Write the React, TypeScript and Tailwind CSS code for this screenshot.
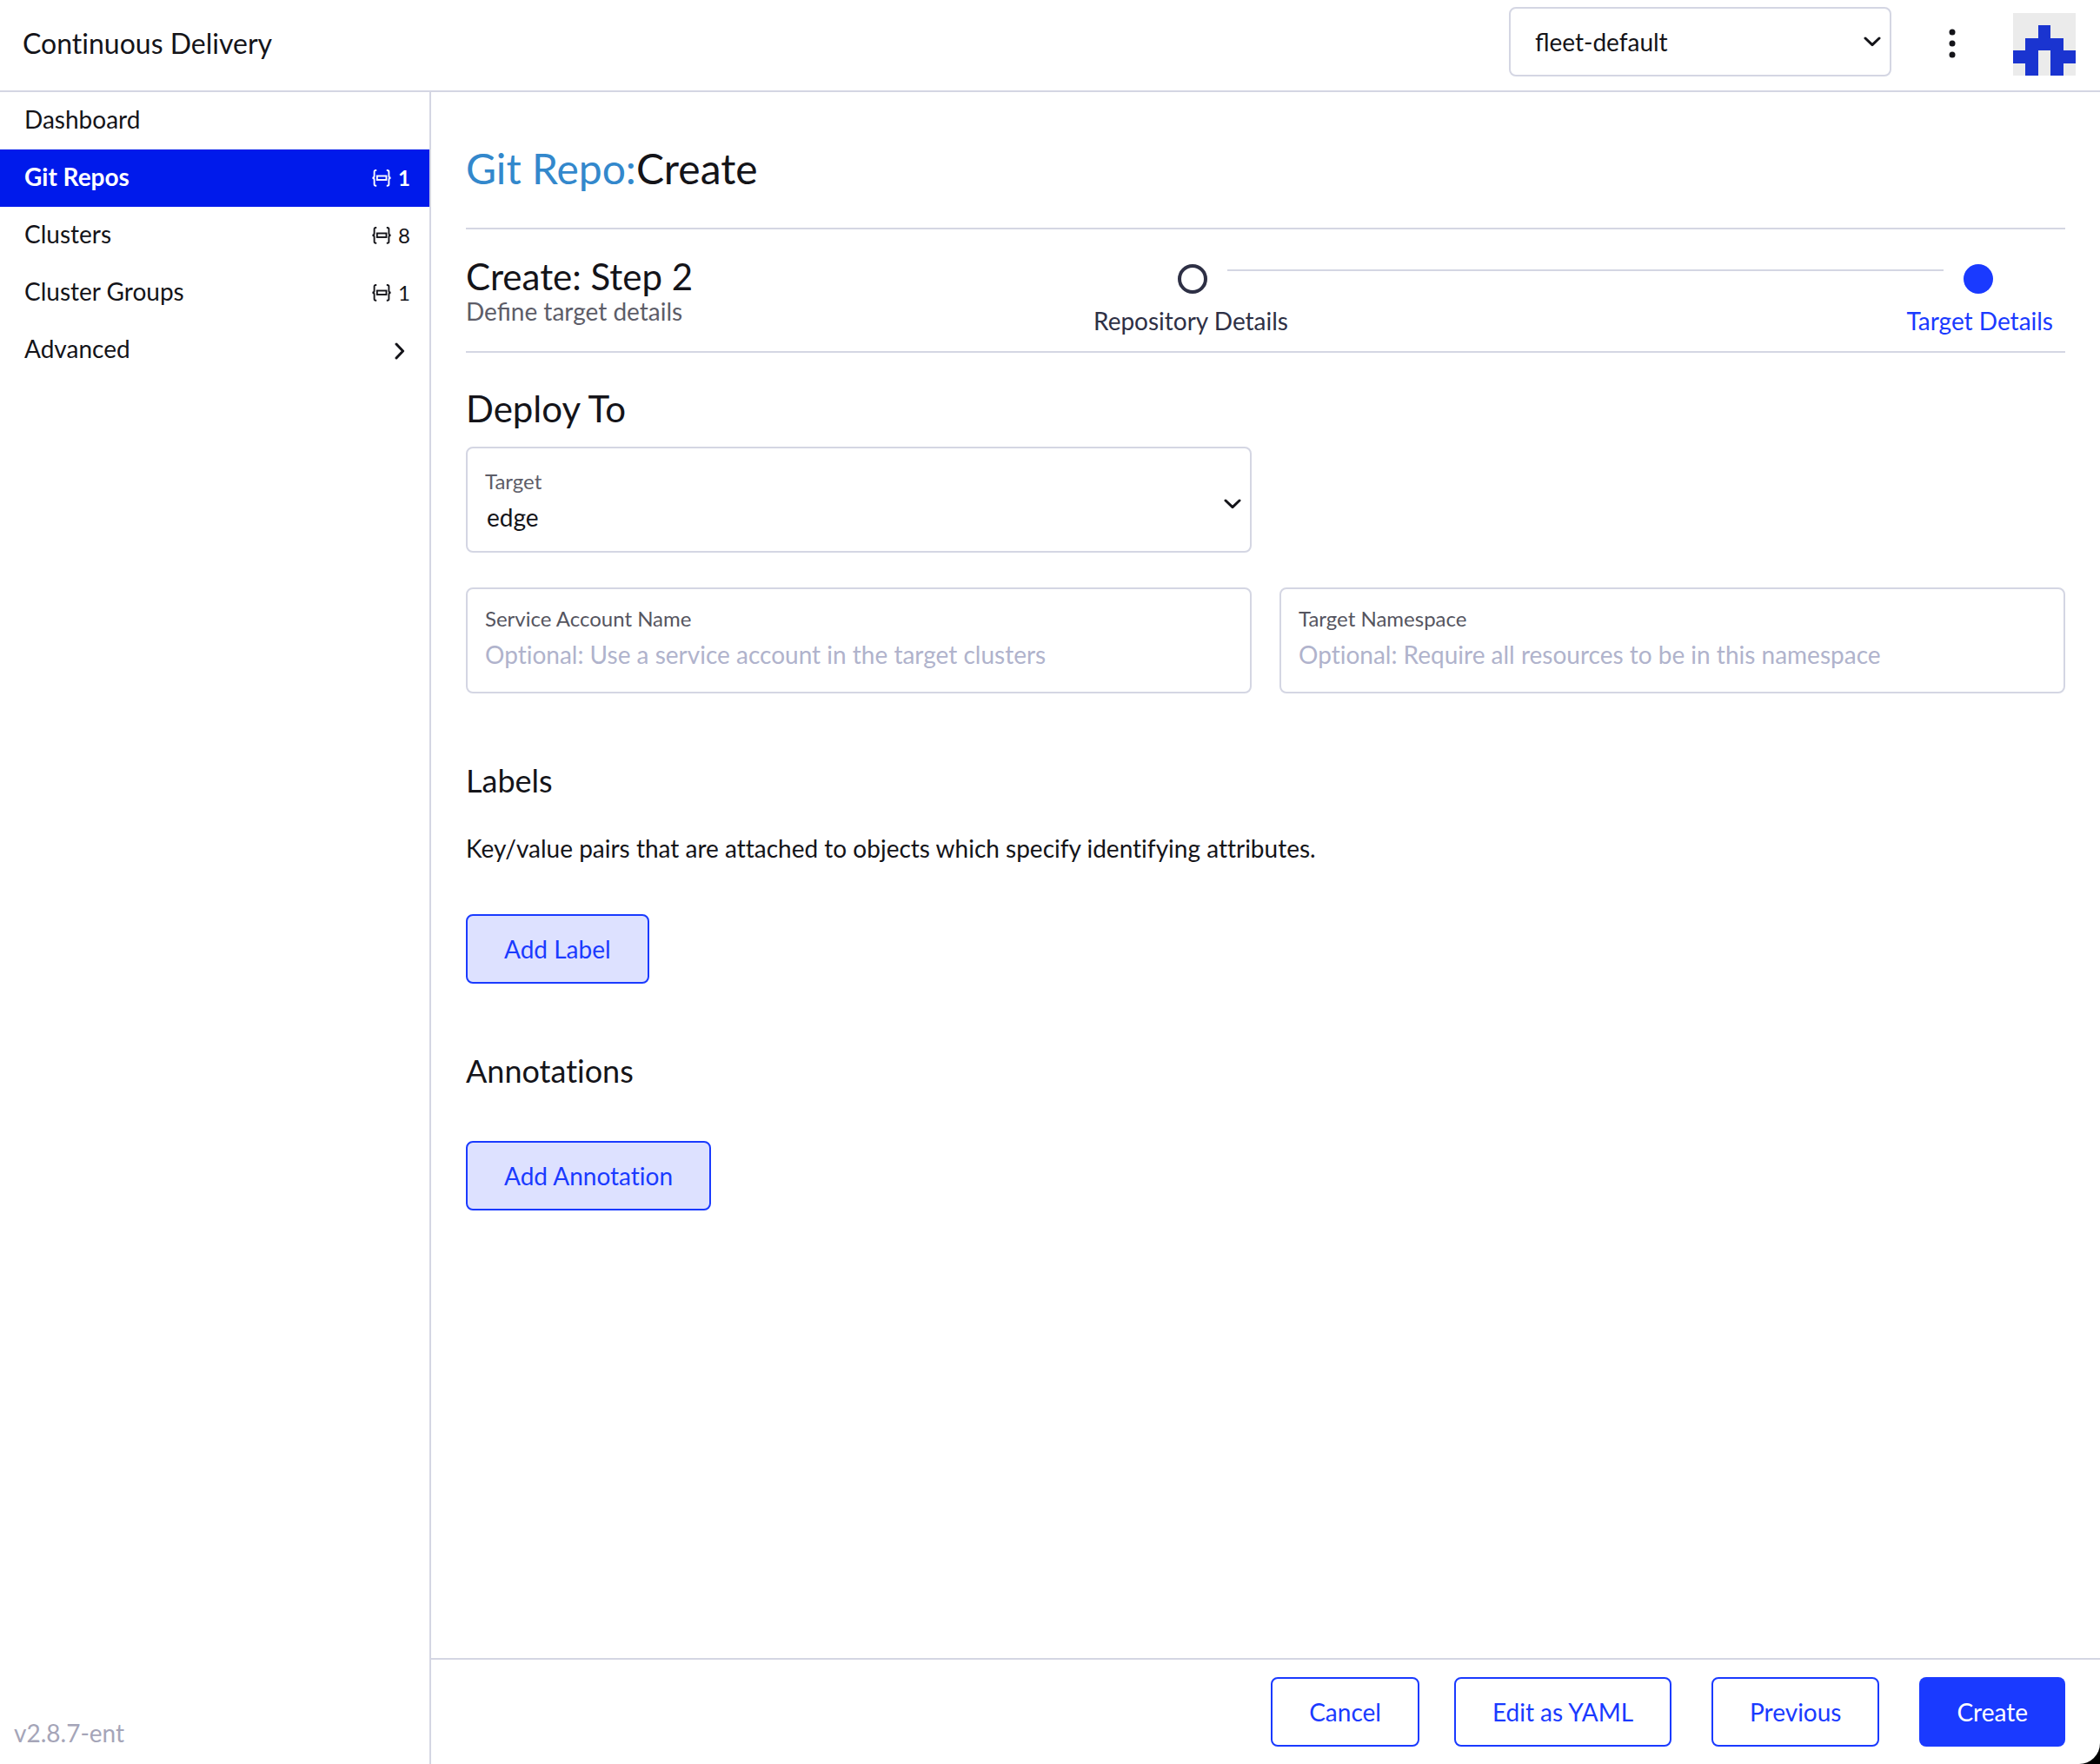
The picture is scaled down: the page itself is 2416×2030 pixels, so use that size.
import React, { useId, useState } from "react";

function NamespaceIcon() {
  return (
    <svg viewBox="0 0 22 20" className="h-5 w-[22px]" fill="none" stroke="currentColor" strokeWidth="1.9" aria-hidden="true">
      <path d="M5.2 1H4.4C3.2 1 2.6 1.6 2.6 2.8V7.6C2.6 9 1.8 9.8 0.4 9.8C1.8 9.8 2.6 10.6 2.6 12V17C2.6 18.2 3.2 18.8 4.4 18.8H5.2" />
      <path d="M16.8 1H17.6C18.8 1 19.4 1.6 19.4 2.8V7.6C19.4 9 20.2 9.8 21.6 9.8C20.2 9.8 19.4 10.6 19.4 12V17C19.4 18.2 18.8 18.8 17.6 18.8H16.8" />
      <rect x="5.8" y="7.5" width="10.7" height="4.5" />
    </svg>
  );
}

function Chevron({ className }: { className: string }) {
  return (
    <svg viewBox="0 0 20 12" className={className} fill="none" stroke="#141419" strokeWidth="3" strokeLinecap="round" strokeLinejoin="round" aria-hidden="true">
      <path d="M2 2L10 9.6L18 2" />
    </svg>
  );
}

function Avatar() {
  return (
    <svg viewBox="0 0 5 5" className="h-[72px] w-[72px]" shapeRendering="crispEdges" role="img" aria-label="User avatar">
      <rect width="5" height="5" fill="#ebebeb" />
      <path fill="#1a34d0" d="M2 1H3V2H4V3H5V4H4V5H3V3H2V5H1V4H0V3H1V2H2Z" />
    </svg>
  );
}

type NavItem = { label: string; count?: number; active?: boolean; expandable?: boolean };

const navItems: NavItem[] = [
  { label: "Dashboard" },
  { label: "Git Repos", count: 1, active: true },
  { label: "Clusters", count: 8 },
  { label: "Cluster Groups", count: 1 },
  { label: "Advanced", expandable: true },
];

function Sidebar() {
  return (
    <nav className="flex w-[496px] shrink-0 flex-col border-r-2 border-[#d4d6e3]">
      {navItems.map((item) => (
        <a
          key={item.label}
          href="#"
          className={
            item.active
              ? "flex h-[66px] items-center justify-between bg-[#001aeb] pr-[22px] pl-7 font-bold text-white"
              : "flex h-[66px] items-center justify-between pr-[22px] pl-7"
          }
        >
          <span className="pb-1">{item.label}</span>
          {item.count !== undefined && (
            <span className="flex items-center gap-2 text-2xl">
              <NamespaceIcon />
              {item.count}
            </span>
          )}
          {item.expandable && <Chevron className="mt-0.5 mr-0.5 h-3 w-5 -rotate-90" />}
        </a>
      ))}
      <span className="mt-auto px-4 pb-5 leading-8 text-[#a5a5b8]">v2.8.7-ent</span>
    </nav>
  );
}

function TextField({ label, placeholder }: { label: string; placeholder: string }) {
  const id = useId();
  return (
    <div className="flex h-[122px] flex-col rounded-lg border-2 border-[#d4d6e3] px-5 pt-[18px]">
      <label htmlFor={id} className="text-2xl leading-8 text-[#55555f]">
        {label}
      </label>
      <input id={id} type="text" placeholder={placeholder} className="h-[50px] w-full bg-transparent outline-none placeholder:text-[#b0b3cc]" />
    </div>
  );
}

function Button({ variant, children }: { variant: "outline" | "tinted" | "solid"; children: React.ReactNode }) {
  const look = {
    outline: "h-20 rounded-lg border-2 border-[#1a3aff] bg-white px-[42px] text-[#1a3aff]",
    tinted: "h-20 rounded-lg border-2 border-[#1a3aff] bg-[#dde1ff] px-[42px] text-[#1a3aff]",
    solid: "h-20 rounded-lg bg-[#1a3aff] px-[43px] text-white",
  }[variant];
  return (
    <button type="button" className={look}>
      {children}
    </button>
  );
}

export default function App() {
  const [workspace, setWorkspace] = useState("fleet-default");
  const [target, setTarget] = useState("edge");

  return (
    <div className="bg-black">
      <div className="flex min-h-screen flex-col rounded-br-[24px] bg-white font-['Lato',sans-serif] text-[28px] leading-8 text-[#141419] [font-variant-ligatures:no-common-ligatures]">
        <header className="flex h-[106px] shrink-0 items-start border-b-2 border-[#d4d6e3] pt-2 pr-7 pl-[26px]">
          <span className="mr-auto text-[32px] leading-[84px]">Continuous Delivery</span>
          <div className="relative w-[440px]">
            <select
              aria-label="Workspace"
              value={workspace}
              onChange={(e) => setWorkspace(e.target.value)}
              className="h-20 w-full appearance-none rounded-lg border-2 border-[#d4d6e3] bg-white pl-7 [font-variant-ligatures:normal]"
            >
              <option>fleet-default</option>
              <option>fleet-local</option>
            </select>
            <Chevron className="pointer-events-none absolute top-[34px] right-3 h-3 w-5" />
          </div>
          <button type="button" aria-label="More actions" className="mx-[60px] flex h-[84px] w-5 items-center justify-center">
            <svg viewBox="0 0 8 34" className="h-[34px] w-2" fill="#141419" aria-hidden="true">
              <circle cx="4" cy="4" r="3.5" />
              <circle cx="4" cy="17" r="3.5" />
              <circle cx="4" cy="30" r="3.5" />
            </svg>
          </button>
          <button type="button" aria-label="User menu" className="pt-[7px]">
            <Avatar />
          </button>
        </header>

        <div className="flex flex-1">
          <Sidebar />

          <div className="flex min-w-0 flex-1 flex-col">
            <main className="flex-1 px-10 pt-[58px]">
              <h1 className="mb-[38px] text-5xl leading-[60px]">
                <a href="#" className="text-[#3388cc]">Git Repo:</a>
                Create
              </h1>

              <section className="flex items-start border-y-2 border-[#d4d6e3] pt-[30px] pb-[18px]">
                <div>
                  <h2 className="text-[42px] leading-[48px]">Create: Step 2</h2>
                  <p className="text-[#5d5d68] [font-variant-ligatures:normal]">Define target details</p>
                </div>
                <div className="mt-2.5 mr-3.5 ml-auto w-3/5">
                  <div className="flex items-start gap-[23px] pr-[69px] pl-[97px]">
                    <span className="h-[34px] w-[34px] rounded-full border-4 border-[#2e3045]" />
                    <span className="mt-1.5 h-0.5 flex-1 bg-[#d4d6e3]" />
                    <span className="h-[34px] w-[34px] rounded-full bg-[#1a3aff]" />
                  </div>
                  <div className="mt-3.5 flex justify-between leading-[34px]">
                    <a href="#" className="text-[#2e3045]">Repository Details</a>
                    <a href="#" className="text-[#1a3aff]">Target Details</a>
                  </div>
                </div>
              </section>

              <h2 className="mt-10 mb-5 text-[42px] leading-[48px]">Deploy To</h2>
              <div className="grid grid-cols-2 gap-x-8 gap-y-10">
                <div className="relative flex h-[122px] flex-col rounded-lg border-2 border-[#d4d6e3] px-5 pt-[22px]">
                  <label htmlFor="deploy-target" className="text-2xl leading-8 text-[#5d5d68]">
                    Target
                  </label>
                  <select
                    id="deploy-target"
                    value={target}
                    onChange={(e) => setTarget(e.target.value)}
                    className="h-[50px] w-full appearance-none bg-transparent px-0.5 outline-none"
                  >
                    <option>edge</option>
                    <option>core</option>
                  </select>
                  <Chevron className="pointer-events-none absolute top-[58px] right-2.5 h-3 w-5" />
                </div>
                <div />
                <TextField label="Service Account Name" placeholder="Optional: Use a service account in the target clusters" />
                <TextField label="Target Namespace" placeholder="Optional: Require all resources to be in this namespace" />
              </div>

              <section className="mt-[78px]">
                <h3 className="text-4xl leading-[44px]">Labels</h3>
                <p className="mt-10 mb-[60px]">Key/value pairs that are attached to objects which specify identifying attributes.</p>
                <Button variant="tinted">Add Label</Button>
              </section>

              <section className="mt-[78px]">
                <h3 className="mb-[59px] text-4xl leading-[44px]">Annotations</h3>
                <Button variant="tinted">Add Annotation</Button>
              </section>
            </main>

            <footer className="flex justify-end gap-[46px] border-t-2 border-[#d4d6e3] px-10 py-5">
              <div className="flex gap-10">
                <Button variant="outline">Cancel</Button>
                <Button variant="outline">Edit as YAML</Button>
              </div>
              <Button variant="outline">Previous</Button>
              <Button variant="solid">Create</Button>
            </footer>
          </div>
        </div>
      </div>
    </div>
  );
}
